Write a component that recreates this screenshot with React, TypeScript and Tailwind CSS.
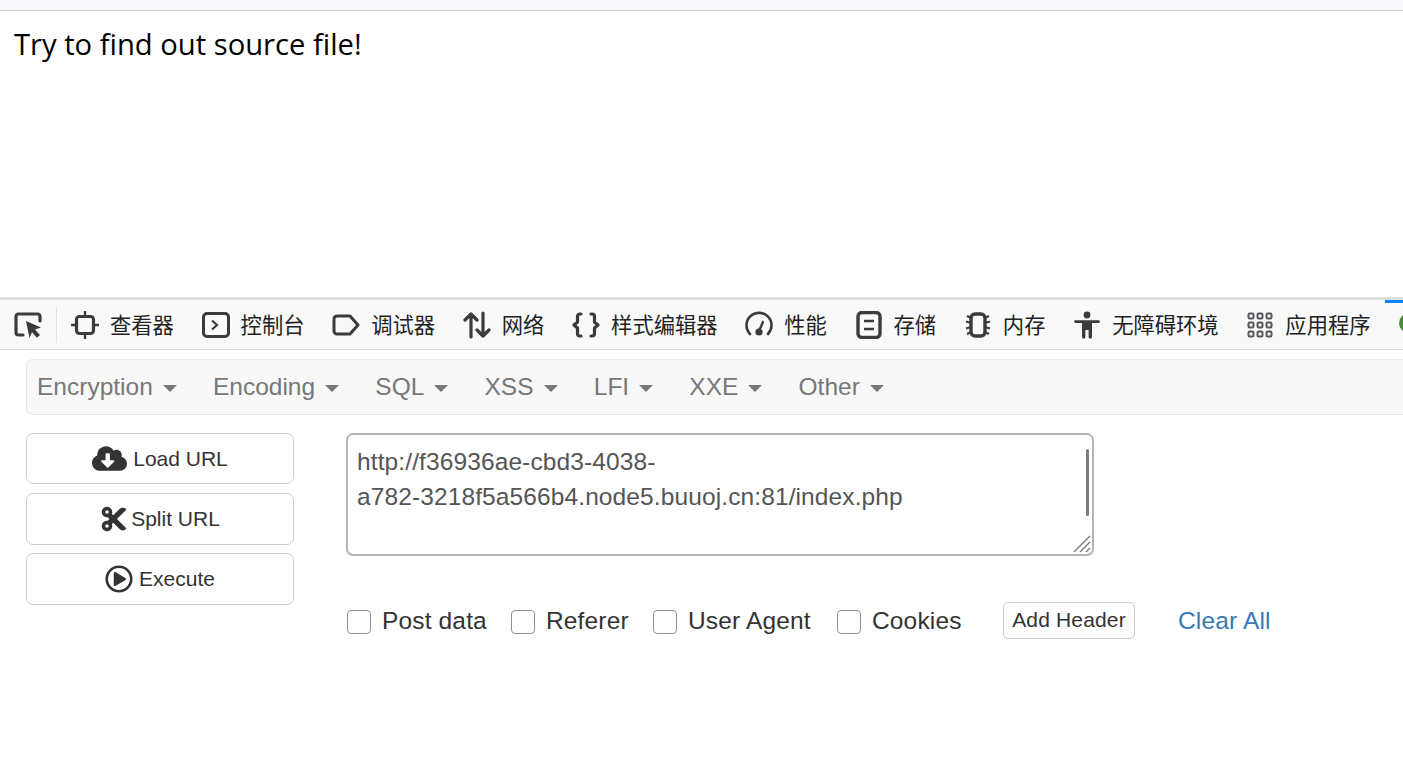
import { FaCloudDownloadAlt, FaCut, FaRegPlayCircle } from "react-icons/fa";

const ink = "#3b3b3f";

function PickerIcon() {
  return (
    <svg viewBox="0 0 28 28" className="h-7 w-7" fill="none">
      <path d="M9 24H4.500A2.500 2.500 0 0 1 2 21.500v-16A2.500 2.500 0 0 1 4.500 3h19A2.500 2.500 0 0 1 26 5.500V10" stroke={ink} strokeWidth="3.200" strokeLinecap="round" />
      <path d="M12 10l15 6.500-6 2 5 5.500-3 2.800-5-5.500L15.500 27z" fill={ink} />
    </svg>
  );
}

const icons: Record<string, React.ReactNode> = {
  inspector: (
    <svg viewBox="0 0 28 28" className="h-7 w-7" fill="none" stroke={ink}>
      <rect x="5.500" y="5.500" width="17" height="17" rx="3" strokeWidth="3.200" />
      <path d="M14 0v5M14 23v5M0 14h5M23 14h5" strokeWidth="2.400" />
    </svg>
  ),
  console: (
    <svg viewBox="0 0 28 28" className="h-7 w-7" fill="none" stroke={ink}>
      <rect x="1.500" y="2.500" width="25" height="23" rx="3.500" strokeWidth="3" />
      <path d="M10 9.500l5 4.500-5 4.500" strokeWidth="2.200" />
    </svg>
  ),
  debugger: (
    <svg viewBox="0 0 28 28" className="h-7 w-7" fill="none" stroke={ink}>
      <path d="M5 5h13l8 9-8 9H5a3 3 0 0 1-3-3V8a3 3 0 0 1 3-3z" strokeWidth="3" strokeLinejoin="round" />
    </svg>
  ),
  network: (
    <svg viewBox="0 0 28 28" className="h-7 w-7" fill="none" stroke={ink} strokeWidth="3.200" strokeLinecap="round" strokeLinejoin="round">
      <path d="M8 26V3M2 9l6-6 6 6M20 2v23M14 19l6 6 6-6" />
    </svg>
  ),
  style: (
    <svg viewBox="0 0 28 28" className="h-7 w-7" fill="none" stroke={ink} strokeWidth="3.200" strokeLinecap="round" strokeLinejoin="round">
      <path d="M9 3H8a2.500 2.500 0 0 0-2.500 2.500v5.500L2 14l3.500 3v5.500A2.500 2.500 0 0 0 8 25h1M19 3h1a2.500 2.500 0 0 1 2.500 2.500v5.500L26 14l-3.500 3v5.500A2.500 2.500 0 0 1 20 25h-1" />
    </svg>
  ),
  perf: (
    <svg viewBox="0 0 28 28" className="h-7 w-7" fill="none" stroke={ink}>
      <path d="M5 23A12.500 12.500 0 1 1 23 23" strokeWidth="2.600" strokeLinecap="round" />
      <path d="M14 20l4-9" strokeWidth="2.400" strokeLinecap="round" />
      <circle cx="14" cy="21" r="3.600" fill={ink} stroke="none" />
    </svg>
  ),
  storage: (
    <svg viewBox="0 0 28 28" className="h-7 w-7" fill="none" stroke={ink}>
      <rect x="3" y="1.500" width="22" height="25" rx="4" strokeWidth="3.400" />
      <path d="M9 10h10M9 18h10" strokeWidth="2.400" />
    </svg>
  ),
  memory: (
    <svg viewBox="0 0 28 28" className="h-7 w-7" fill="none" stroke={ink}>
      <rect x="7" y="3" width="14" height="22" rx="4" strokeWidth="3.400" />
      <path d="M7 7L3 5M7 12l-5-1.500M7 16l-5 1.500M7 21l-4 2M21 7l4-2M21 12l5-1.500M21 16l5 1.500M21 21l4 2" strokeWidth="2" />
    </svg>
  ),
  a11y: (
    <svg viewBox="0 0 28 28" className="h-7 w-7" fill={ink}>
      <circle cx="14" cy="4" r="3.400" />
      <path d="M2.500 9.200h23a1.400 1.400 0 0 1 0 2.800H19v14a1.700 1.700 0 0 1-3.400 0v-7h-3.200v7a1.700 1.700 0 0 1-3.400 0V12H2.500a1.400 1.400 0 0 1 0-2.800z" />
    </svg>
  ),
  app: (
    <svg viewBox="0 0 28 28" className="h-7 w-7" fill="none" stroke="#55555a" strokeWidth="2">
      {[2.5, 11.5, 20.5].flatMap((y) =>
        [2.5, 11.5, 20.5].map((x) => <rect key={`${x}-${y}`} x={x} y={y} width="5" height="5" rx="1.200" />),
      )}
    </svg>
  ),
};

const tools = [
  { icon: "inspector", label: "查看器" },
  { icon: "console", label: "控制台" },
  { icon: "debugger", label: "调试器" },
  { icon: "network", label: "网络" },
  { icon: "style", label: "样式编辑器" },
  { icon: "perf", label: "性能" },
  { icon: "storage", label: "存储" },
  { icon: "memory", label: "内存" },
  { icon: "a11y", label: "无障碍环境" },
  { icon: "app", label: "应用程序" },
];

const menus = ["Encryption", "Encoding", "SQL", "XSS", "LFI", "XXE", "Other"];
const checks = [
  { label: "Post data", className: "w-[164px]" },
  { label: "Referer", className: "w-[142px]" },
  { label: "User Agent", className: "w-[184px]" },
  { label: "Cookies", className: "w-[166px]" },
];

export default function App() {
  return (
    <div className="h-[779px] w-[1403px] overflow-hidden bg-white font-['Liberation_Sans',sans-serif] text-[#333]">
      <div className="h-[11px] border-b border-[#cfcfd4] bg-[#f9f9fb]" />
      <div className="h-[286px] pl-[14px] pt-[11px]">
        <p className="font-['Open_Sans',sans-serif] text-[29.2px] leading-[44px] text-black">Try to find out source file!</p>
      </div>

      <div className="relative flex h-[52px] items-center border-t-[3px] border-[#dedede] bg-[#f9f9f9] pl-[14px]">
        <PickerIcon />
        <div className="mx-[14px] h-9 w-px bg-[#e0e0e2]" />
        <div className="flex items-center gap-[27.7px] whitespace-nowrap">
          {tools.map((tool) => (
            <div key={tool.label} className="flex items-center gap-[11px]">
              {icons[tool.icon]}
              <span className="mb-[2px] font-['Noto_Sans_CJK_SC',sans-serif] text-[21.3px] leading-7 text-[#222]">{tool.label}</span>
            </div>
          ))}
        </div>
        <div className="absolute left-[1385px] top-0 h-[3px] w-[18px] bg-[#0a84ff]" />
        <div className="absolute left-[1399px] top-[13px] h-[20px] w-[20px] rounded-full bg-[#4a8a3a]" />
      </div>
      <div className="h-px bg-[#dedede]" />

      <div className="pl-[26px] pt-[9px]">
        <div className="flex h-[56px] w-[1400px] items-center gap-[36.2px] rounded-l-[7px] border border-r-0 border-[#e7e7e7] bg-[#f8f8f8] pl-[10px]">
          {menus.map((menu) => (
            <div key={menu} className="flex items-center gap-[10px] text-[24.5px] text-[#777]">
              <span>{menu}</span>
              <span className="mt-[3px] h-0 w-0 border-x-[7px] border-t-[7px] border-x-transparent border-t-[#777]" />
            </div>
          ))}
        </div>

        <div className="mt-[18px] flex">
          <div className="flex w-[268px] flex-col">
            <div className="flex h-[51px] items-center justify-center gap-[6px] rounded-[7px] border border-[#ccc] text-[21px]">
              <FaCloudDownloadAlt className="text-[35px]" />
              <span>Load URL</span>
            </div>
            <div className="mt-[9px] flex h-[52px] items-center justify-center gap-[3px] rounded-[7px] border border-[#ccc] text-[21px]">
              <FaCut className="text-[28px]" />
              <span>Split URL</span>
            </div>
            <div className="mt-[8px] flex h-[52px] items-center justify-center gap-[6px] rounded-[7px] border border-[#ccc] text-[21px]">
              <FaRegPlayCircle className="text-[28px]" />
              <span>Execute</span>
            </div>
          </div>

          <div className="ml-[52px]">
            <div className="relative h-[123px] w-[748px]">
              <textarea
                readOnly
                defaultValue={"http://f36936ae-cbd3-4038-\na782-3218f5a566b4.node5.buuoj.cn:81/index.php"}
                className="h-full w-full resize-none overflow-hidden rounded-[7px] border-2 border-[#b4b4b4] px-[9px] py-[9px] text-[24.5px] leading-[35px] tracking-[0.11px] text-[#555] outline-none"
              />
              <div className="absolute right-[5px] top-[16px] h-[67px] w-[3px] rounded-full bg-[#7d7d7d]" />
              <svg viewBox="0 0 18 18" className="absolute bottom-[3px] right-[3px] h-[18px] w-[18px]" stroke="#777" strokeWidth="1.300">
                <path d="M1 17L17 1M7 17L17 7M13 17l4-4" />
              </svg>
            </div>

            <div className="mt-[46px] flex h-[37px] items-center pl-px text-[24.5px] tracking-[0.15px]">
              {checks.map((check) => (
                <label key={check.label} className={`flex items-center gap-[11px] pt-[2px] ${check.className}`}>
                  <span className="h-6 w-6 rounded-[4px] border border-[#8f8f9d] bg-white" />
                  <span>{check.label}</span>
                </label>
              ))}
              <div className="flex h-[37px] w-[132px] items-center justify-center rounded-[5px] border border-[#ccc] pb-px text-[21px]">Add Header</div>
              <span className="ml-[43px] pt-[2px] text-[#337ab7]">Clear All</span>
            </div>
          </div>
        </div>
      </div>
    </div>
  );
}
